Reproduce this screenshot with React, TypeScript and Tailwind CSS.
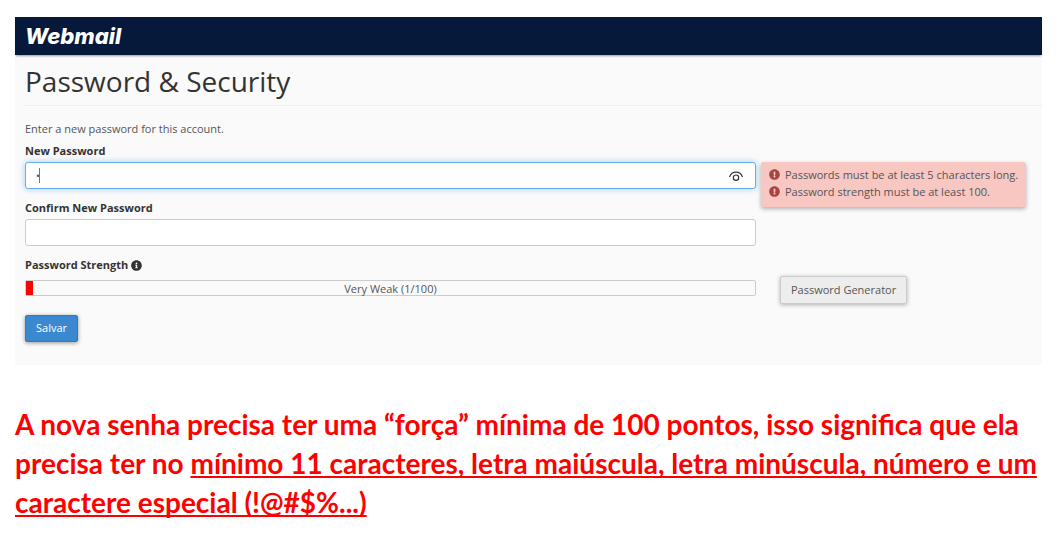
import { useState } from "react";
import { FaExclamationCircle, FaInfoCircle } from "react-icons/fa";

const errors = [
  "Passwords must be at least 5 characters long.",
  "Password strength must be at least 100.",
];

const Header = () => {
  return (
    <header className="relative flex h-[38px] items-center bg-[#07193b] px-[10px] shadow-[0_2px_2px_-1px_rgba(0,0,0,0.4)]">
      <a
        href="#"
        className="font-[Inter,sans-serif] text-[22px] leading-6 font-extrabold text-white italic"
      >
        Webmail
      </a>
    </header>
  );
};

const EyeIcon = () => {
  return (
    <svg
      width="16"
      height="12"
      viewBox="0 0 16 12"
      fill="none"
      stroke="#333"
      strokeWidth="1.2"
      aria-hidden="true"
    >
      <path d="M1.500 7C2.700 3.800 5 2.200 8 2.200s5.300 1.600 6.500 4.800" />
      <circle cx="8" cy="7.700" r="2.700" />
    </svg>
  );
};

const PasswordErrors = () => {
  return (
    <ul
      role="alert"
      className="absolute top-0 left-full ml-[5px] rounded-[3px] bg-[#f8c7c2] px-2 pt-1 pb-[7px] whitespace-nowrap shadow-[0_2px_4px_rgba(0,0,0,0.3)]"
    >
      {errors.map((error) => (
        <li key={error} className="flex items-center gap-[5px] leading-[17px]">
          <FaExclamationCircle className="size-[11px] text-[#a94442]" />
          {error}
        </li>
      ))}
    </ul>
  );
};

const PasswordForm = () => {
  const [password, setPassword] = useState("a");
  const [visible, setVisible] = useState(false);
  const strength = 1;

  return (
    <form
      onSubmit={(e) => e.preventDefault()}
      className="grid grid-cols-[minmax(0,1fr)_286px] pb-[23px] pl-[10px]"
    >
      {/* New password */}
      <label htmlFor="password" className="h-5 leading-[18px] font-bold text-[#333]">
        New Password
      </label>
      <div className="relative col-start-1 mb-[10px]">
        <input
          id="password"
          type={visible ? "text" : "password"}
          value={password}
          onChange={(e) => setPassword(e.target.value)}
          className="block h-[27px] w-full rounded-[3px] border border-[#66afe9] bg-white pr-10 pl-[10px] shadow-[0_0_6px_rgba(102,175,233,0.6)] outline-none"
        />
        <span className="absolute top-[6px] left-[14px] h-[15px] w-px bg-[#777]" />
        <button
          type="button"
          aria-label="Show password"
          onClick={() => setVisible((prev) => !prev)}
          className="absolute top-2 right-3"
        >
          <EyeIcon />
        </button>
        <PasswordErrors />
      </div>

      {/* Confirm password */}
      <label
        htmlFor="confirm"
        className="col-start-1 h-5 leading-[18px] font-bold text-[#333]"
      >
        Confirm New Password
      </label>
      <input
        id="confirm"
        type="password"
        className="col-start-1 mb-[10px] block h-[27px] w-full rounded-[3px] border border-[#ccc] bg-white px-[10px] outline-none"
      />

      {/* Strength meter */}
      <div className="col-start-1 flex h-5 items-center gap-[3px] pb-[2px] font-bold text-[#333]">
        <span id="strength-label">Password Strength</span>
        <FaInfoCircle className="size-[11px]" />
      </div>
      <div className="col-start-1 flex items-center pb-1">
        <div
          role="meter"
          aria-labelledby="strength-label"
          aria-valuenow={strength}
          aria-valuemin={0}
          aria-valuemax={100}
          className="relative h-4 w-full rounded-[2px] border border-[#ccc] text-center leading-4"
        >
          <div
            className="absolute inset-y-0 left-0 bg-[#f00]"
            style={{ width: `${strength}%` }}
          />
          Very Weak ({strength}/100)
        </div>
      </div>
      <div className="col-start-2 pl-6">
        <button
          type="button"
          className="h-7 rounded-[2px] border border-[#ccc] bg-[#ededed] px-[10px] shadow-[0_1px_4px_rgba(0,0,0,0.3)]"
        >
          Password Generator
        </button>
      </div>

      <button
        type="submit"
        className="col-start-1 mt-[11px] h-[27px] justify-self-start rounded-[2px] border border-[#2d7bc0] bg-[#3a89d0] px-[10px] text-white shadow-[0_1px_4px_rgba(0,0,0,0.4)]"
      >
        Salvar
      </button>
    </form>
  );
};

const App = () => {
  return (
    <div className="bg-white pt-[17px] pr-[19px] pb-5 pl-[15px]">
      <section className="bg-[#fafafa] font-['Open_Sans',sans-serif] text-[11px] text-[#555]">
        <Header />
        <h1 className="ml-[10px] border-b border-[#eee] pt-[7px] pb-1 text-[28px] leading-[39px] text-[#333]">
          Password &amp; Security
        </h1>
        <p className="mt-[14px] pb-1 pl-[10px] leading-[18px]">
          Enter a new password for this account.
        </p>
        <PasswordForm />
      </section>

      <p className="mt-10 font-[Lato,sans-serif] text-[28px] leading-[39px] font-bold text-[#f00]">
        A nova senha precisa ter uma “força” mínima de 100 pontos, isso significa que ela
        precisa ter no{" "}
        <span className="underline decoration-2 underline-offset-2 [text-decoration-skip-ink:none]">
          mínimo 11 caracteres, letra maiúscula, letra minúscula, número e um caractere
          especial (!@#$%...)
        </span>
      </p>
    </div>
  );
};

export default App;
